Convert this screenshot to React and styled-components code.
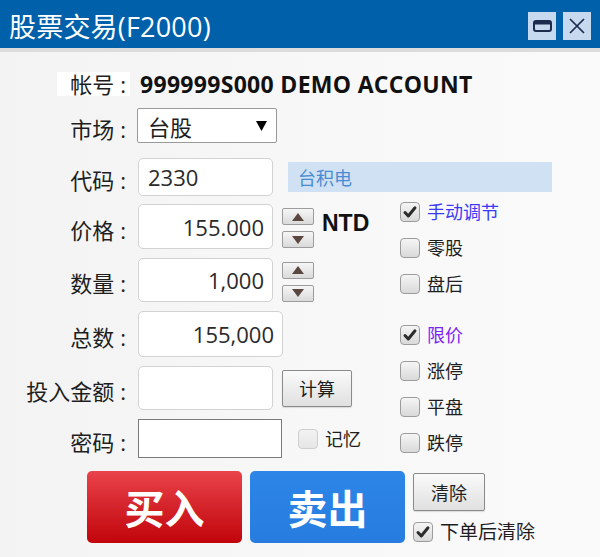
import React from 'react';
import styled, { createGlobalStyle } from 'styled-components';

const FONT = `"Open Sans", "Noto Sans CJK SC", sans-serif`;

const Global = createGlobalStyle`
  html, body { margin: 0; padding: 0; background: #f7f7f7; }
  body { font-family: ${FONT}; color: #1e1e1e; }
  * { box-sizing: border-box; }
`;

const Window = styled.div`
  width: 600px;
  height: 557px;
  overflow: hidden;
  display: flex;
  flex-direction: column;
  background: linear-gradient(90deg, #f3f3f3 0%, #f8f8f8 60%, #fafafa 100%);
`;

const TitleBar = styled.div`
  height: 52px;
  flex-shrink: 0;
  background: #0060aa;
  border-bottom: 4px solid #dcdcdc;
  display: flex;
  align-items: center;
  justify-content: space-between;
  padding: 4px 9px 0 9px;
`;

const Title = styled.div`
  color: #ffffff;
  font-size: 27px;
  line-height: 1;
  font-weight: 400;
  letter-spacing: 0.2px;
`;

const WinButtons = styled.div`
  display: flex;
  gap: 7px;
`;

const WinButton = styled.div`
  width: 28px;
  height: 28px;
  background: #c7d9ee;
  display: flex;
  align-items: center;
  justify-content: center;
`;

const Body = styled.div`
  display: flex;
  flex-direction: column;
`;

const Row = styled.div`
  display: flex;
  align-items: center;
  gap: 12px;
  margin-top: ${p => p.$top || 0}px;
`;

const Label = styled.div`
  width: 126px;
  flex-shrink: 0;
  text-align: right;
  font-size: 22px;
  line-height: 1;
  padding-top: 6px;
  white-space: nowrap;
`;

const Colon = styled.span`
  padding-left: 6px;
`;

const AccountLabel = styled(Label)`
  width: 130px;
  height: 24px;
  padding-top: 1px;
  padding-right: 4px;
  background: linear-gradient(90deg, transparent 57px, #ffffff 57px);
`;

const AccountValue = styled.div`
  font-size: 23px;
  font-weight: 700;
  line-height: 1;
  margin-left: -2px;
  color: #111;
  letter-spacing: 0.3px;
`;

const Select = styled.div`
  width: 140px;
  height: 35px;
  background: #fff;
  border: 1px solid #9a9a9a;
  border-radius: 2px;
  display: flex;
  align-items: center;
  justify-content: space-between;
  padding: 0 9px 0 10px;
  font-size: 22px;
  color: #1e1e1e;
  margin-left: -1px;
`;

const Field = styled.input`
  width: ${p => p.$w || 135}px;
  height: ${p => p.$h || 44}px;
  background: #ffffff;
  border: 1px solid ${p => (p.$square ? '#7a7a7a' : '#d2d2d2')};
  border-radius: ${p => (p.$square ? 0 : 5)}px;
  font-family: ${FONT};
  font-size: 22px;
  color: #2a2a2a;
  text-align: ${p => (p.$left ? 'left' : 'right')};
  padding: 0 8px 0 9px;
  outline: none;
  flex-shrink: 0;
`;

const StockName = styled.div`
  width: 264px;
  height: 30px;
  margin-left: 3px;
  background: #cfe1f2;
  color: #4a8cd3;
  font-size: 18px;
  display: flex;
  align-items: center;
  padding-left: 10px;
`;

const Middle = styled.div`
  display: flex;
  margin-top: 2px;
`;

const LeftCol = styled.div`
  width: 400px;
  flex-shrink: 0;
  padding-top: 6px;
  display: flex;
  flex-direction: column;
  gap: 9px;
`;

const RightCol = styled.div`
  display: flex;
  flex-direction: column;
  gap: 8px;
`;

const SpinStack = styled.div`
  display: flex;
  flex-direction: column;
  gap: 6px;
  margin-left: -3px;
  margin-top: 3px;
`;

const SpinButton = styled.div`
  width: 32px;
  height: 17px;
  border: 1px solid #9c9c9c;
  border-radius: 2px;
  background: linear-gradient(#f6f6f6, #dadada);
  display: flex;
  align-items: center;
  justify-content: center;
`;

const Unit = styled.div`
  font-family: "Liberation Sans", sans-serif;
  font-weight: 700;
  font-size: 23px;
  color: #111;
  margin-left: -4px;
  margin-top: -6px;
`;

const PlainButton = styled.div`
  width: ${p => p.$w || 70}px;
  height: ${p => p.$h || 37}px;
  margin-left: ${p => p.$left || 0}px;
  border: 1px solid #8a8a8a;
  border-radius: 2px;
  background: linear-gradient(#fafafa, #e0e0e0);
  box-shadow: 0 1px 1px rgba(0, 0, 0, 0.12);
  display: flex;
  align-items: center;
  justify-content: center;
  font-size: 18px;
  color: #1e1e1e;
  flex-shrink: 0;
`;

const CheckItem = styled.div`
  display: flex;
  align-items: center;
  gap: 7px;
  height: ${p => p.$h || 28}px;
  margin-top: ${p => p.$top || 0}px;
  margin-left: ${p => p.$left || 0}px;
  font-size: ${p => p.$size || 18}px;
  color: ${p => p.$color || '#1e1e1e'};
  line-height: 1;
  white-space: nowrap;
`;

const Box = styled.div`
  width: 20px;
  height: 20px;
  flex-shrink: 0;
  border-radius: 4px;
  border: 1px solid ${p => (p.$dim ? '#cfcfcf' : '#9c9c9c')};
  background: ${p => (p.$dim ? 'linear-gradient(#f2f2f2, #e6e6e6)' : 'linear-gradient(#f5f5f5, #d9d9d9)')};
  display: flex;
  align-items: center;
  justify-content: center;
`;

const Bottom = styled.div`
  display: flex;
  gap: 8px;
  padding-left: 87px;
  margin-top: 13px;
`;

const BigButton = styled.div`
  width: 155px;
  height: 72px;
  border-radius: 5px;
  background: ${p =>
    p.$kind === 'buy'
      ? 'linear-gradient(#ea434b 0%, #d6262d 45%, #c2040b 100%)'
      : 'linear-gradient(#2d85e8 0%, #277ddf 100%)'};
  color: #fff;
  font-size: 40px;
  font-weight: 700;
  display: flex;
  align-items: center;
  justify-content: center;
  flex-shrink: 0;
`;

const SideStack = styled.div`
  display: flex;
  flex-direction: column;
  padding-top: 2px;
  gap: 11px;
`;

const Check = ({ on, dim }) => (
  <Box $dim={dim}>
    {on && (
      <svg width="16" height="16" viewBox="0 0 16 16">
        <path d="M3 8.5 L6.3 12 L13 3.8" fill="none" stroke="#2b2b2b" strokeWidth="3" strokeLinecap="round" strokeLinejoin="round" />
      </svg>
    )}
  </Box>
);

const Tri = ({ down, w = 12, h = 8, color = '#5a4840' }) => (
  <svg width={w} height={h} viewBox={`0 0 ${w} ${h}`}>
    <polygon points={down ? `0,0 ${w},0 ${w / 2},${h}` : `0,${h} ${w / 2},0 ${w},${h}`} fill={color} />
  </svg>
);

const Spinner = () => (
  <SpinStack>
    <SpinButton><Tri /></SpinButton>
    <SpinButton><Tri down /></SpinButton>
  </SpinStack>
);

const Lbl = ({ children }) => (
  <Label>
    {children}
    <Colon>:</Colon>
  </Label>
);

export default function App() {
  return (
    <>
      <Global />
      <Window>
        <TitleBar>
          <Title>股票交易(F2000)</Title>
          <WinButtons>
            <WinButton>
              <svg width="19" height="12" viewBox="0 0 19 12">
                <rect x="1" y="1" width="17" height="10" rx="2" fill="none" stroke="#1d2b4e" strokeWidth="2" />
                <rect x="1" y="1" width="17" height="3.5" rx="1.5" fill="#1d2b4e" />
              </svg>
            </WinButton>
            <WinButton>
              <svg width="16" height="16" viewBox="0 0 16 16">
                <path d="M1 1 L15 15 M15 1 L1 15" stroke="#1d2b4e" strokeWidth="1.7" />
              </svg>
            </WinButton>
          </WinButtons>
        </TitleBar>

        <Body>
          <Row $top={20}>
            <AccountLabel>帐号<Colon>:</Colon></AccountLabel>
            <AccountValue>999999S000 DEMO ACCOUNT</AccountValue>
          </Row>

          <Row $top={12}>
            <Lbl>市场</Lbl>
            <Select>
              <span>台股</span>
              <Tri down w={11} h={10} color="#000" />
            </Select>
          </Row>

          <Row $top={15}>
            <Lbl>代码</Lbl>
            <Field $left $h={38} defaultValue="2330" readOnly />
            <StockName>台积电</StockName>
          </Row>

          <Middle>
            <LeftCol>
              <Row>
                <Lbl>价格</Lbl>
                <Field $h={45} defaultValue="155.000" readOnly />
                <Spinner />
                <Unit>NTD</Unit>
              </Row>
              <Row>
                <Lbl>数量</Lbl>
                <Field $h={44} defaultValue="1,000" readOnly />
                <Spinner />
              </Row>
              <Row>
                <Lbl>总数</Lbl>
                <Field $w={145} $h={46} defaultValue="155,000" readOnly />
              </Row>
              <Row>
                <Lbl>投入金额</Lbl>
                <Field $h={44} defaultValue="" readOnly />
                <PlainButton $left={-3}>计算</PlainButton>
              </Row>
              <Row>
                <Lbl>密码</Lbl>
                <Field $square $w={144} $h={39} type="password" defaultValue="" readOnly />
                <CheckItem $left={4} $h={20} $size={18}>
                  <Check dim />
                  <span>记忆</span>
                </CheckItem>
              </Row>
            </LeftCol>

            <RightCol>
              <CheckItem $color="#3b3bf5"><Check on /><span>手动调节</span></CheckItem>
              <CheckItem><Check /><span>零股</span></CheckItem>
              <CheckItem><Check /><span>盘后</span></CheckItem>
              <CheckItem $top={15} $color="#7a26f2"><Check on /><span>限价</span></CheckItem>
              <CheckItem><Check /><span>涨停</span></CheckItem>
              <CheckItem><Check /><span>平盘</span></CheckItem>
              <CheckItem><Check /><span>跌停</span></CheckItem>
            </RightCol>
          </Middle>

          <Bottom>
            <BigButton $kind="buy">买入</BigButton>
            <BigButton $kind="sell">卖出</BigButton>
            <SideStack>
              <PlainButton $w={72} $h={38}>清除</PlainButton>
              <CheckItem $h={20} $size={19}>
                <Check on />
                <span>下单后清除</span>
              </CheckItem>
            </SideStack>
          </Bottom>
        </Body>
      </Window>
    </>
  );
}
